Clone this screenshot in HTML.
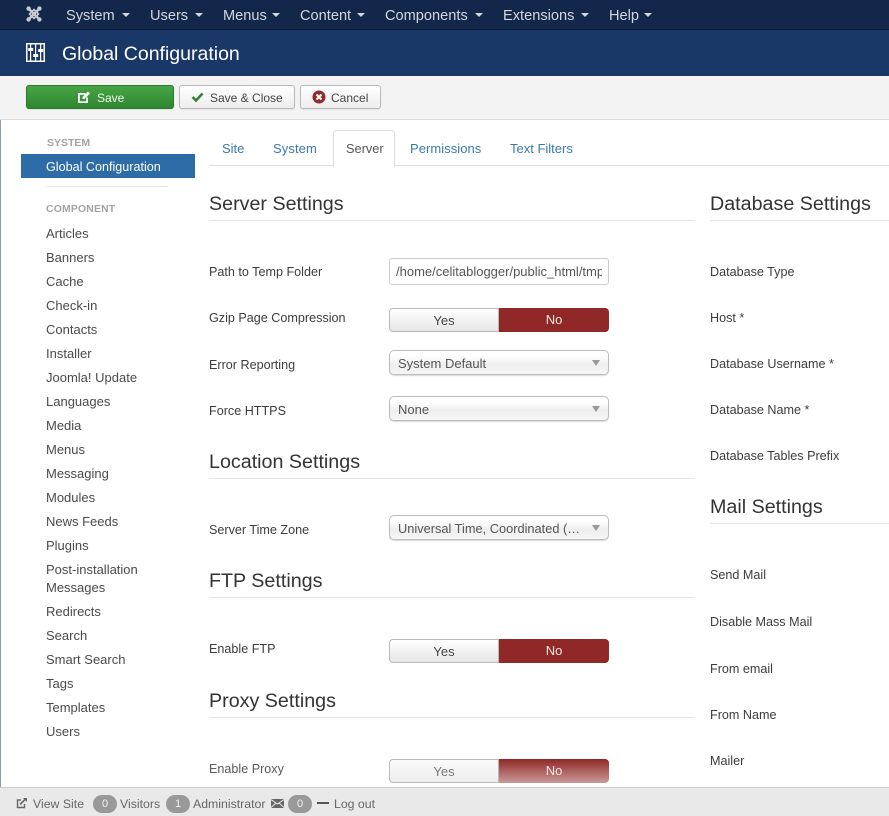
<!DOCTYPE html>
<html><head><meta charset="utf-8"><title>Global Configuration</title>
<style>
html,body{margin:0;padding:0}
body{width:889px;height:816px;position:relative;overflow:hidden;background:#fff;font-family:"Liberation Sans",Arial,sans-serif;font-size:13px;color:#333}
.a,.t{position:absolute}
.t{white-space:nowrap;line-height:18px}
.n{color:#d4d7dc;font-size:14.6px;top:7px;line-height:18px}
.car{position:absolute;width:0;height:0;border-left:4px solid transparent;border-right:4px solid transparent;border-top:4px solid #d4d7dc;top:13px}
.s{left:46px;font-size:13px;color:#4a4a4a;margin-top:1px}
.h{font-size:19.7px;color:#333;line-height:24px;margin-top:1px}
.l{font-size:12.6px;color:#3c3c3c;margin-top:1px}
.hr{position:absolute;height:1px;background:#e5e5e5}
.y{position:absolute;left:389px;width:110px;height:24px;box-sizing:border-box;border:1px solid #b9b9b9;border-radius:4px 0 0 4px;background:linear-gradient(#fff,#e6e6e6);text-align:center;font-size:13px;line-height:23px;color:#444}
.o{position:absolute;left:499px;width:110px;height:24px;border-radius:0 4px 4px 0;background:#8f2826;text-align:center;font-size:13px;line-height:24px;color:#f4e9e9}
.sel{position:absolute;left:389px;width:220px;height:25px;box-sizing:border-box;border:1px solid #bdbdbd;border-radius:5px;background:linear-gradient(#fff 20%,#eee 60%,#f6f6f6);box-shadow:0 1px 1px rgba(0,0,0,.15);font-size:13px;line-height:25px;color:#555;padding-left:8px;white-space:nowrap}
.sel:after{content:"";position:absolute;right:8px;top:9px;border-left:4px solid transparent;border-right:4px solid transparent;border-top:6px solid #999}
.b{position:absolute;top:85px;height:24px;box-sizing:border-box;border:1px solid #b9b9b9;border-radius:3px;background:linear-gradient(#fff,#ededed);font-size:12px;line-height:22px;color:#444;box-shadow:0 1px 1px rgba(0,0,0,.08)}
.tb{font-size:13px;top:140px;color:#3a78b2}
.badge{position:absolute;top:795px;width:24px;height:18px;border-radius:9px;background:#999;color:#f3f3f3;text-align:center;font-size:11px;line-height:19px}
.f{font-size:12.3px;color:#666;top:795px}
</style></head><body>
<div class="a" style="left:0;top:0;width:889px;height:29px;background:#13274a"></div>
<div class="a" style="left:0;top:29px;width:889px;height:1px;background:#0c1b33"></div>
<div class="a" style="left:0;top:30px;width:889px;height:46px;background:#1a3867"></div>
<div class="a" style="left:0;top:76px;width:889px;height:43px;background:#f3f3f3"></div>
<div class="a" style="left:0;top:119px;width:889px;height:1px;background:#dcdcdc"></div>
<div class="a" style="left:0;top:120px;width:1px;height:667px;background:#8c9bb0"></div>

<svg class="a" style="left:26px;top:6px" width="16" height="16" viewBox="0 0 16 16"><g stroke="#c8ccd2" fill="none"><path d="M3 3L13 13M13 3L3 13" stroke-width="2.4"/><path d="M8 3.5L12.5 8L8 12.5L3.5 8Z" stroke-width="1.6"/></g><g fill="#c8ccd2"><circle cx="2.6" cy="2.6" r="2.2"/><circle cx="13.4" cy="2.6" r="2.2"/><circle cx="2.6" cy="13.4" r="2.2"/><circle cx="13.4" cy="13.4" r="2.2"/></g></svg>
<div class="t n" style="left:66px">System</div><i class="car" style="left:122px"></i>
<div class="t n" style="left:150px">Users</div><i class="car" style="left:195px"></i>
<div class="t n" style="left:223px">Menus</div><i class="car" style="left:272px"></i>
<div class="t n" style="left:300px">Content</div><i class="car" style="left:357px"></i>
<div class="t n" style="left:385px">Components</div><i class="car" style="left:475px"></i>
<div class="t n" style="left:503px">Extensions</div><i class="car" style="left:581px"></i>
<div class="t n" style="left:609px">Help</div><i class="car" style="left:644px"></i>

<svg class="a" style="left:26px;top:43px" width="19" height="19" viewBox="0 0 19 19"><rect x=".75" y=".75" width="17.5" height="17.5" fill="none" stroke="#fff" stroke-width="1.5"/><g fill="#fff"><rect x="4" y="1" width="1.2" height="17"/><rect x="9" y="1" width="1.2" height="17"/><rect x="14" y="1" width="1.2" height="17"/><rect x="2.2" y="5" width="5" height="3"/><rect x="7.2" y="11" width="5" height="3"/><rect x="12.2" y="6" width="5" height="3"/></g></svg>
<div class="t" style="left:62px;top:42px;font-size:19.5px;line-height:24px;color:#fff">Global Configuration</div>

<div class="b" style="left:26px;width:148px;background:linear-gradient(#46a546,#2f862f);border:1px solid #2a7a2a;color:#eef6ee"><span class="t" style="left:70px;top:3px">Save</span>
<svg class="a" style="left:50px;top:4px" width="14" height="14" viewBox="0 0 14 14"><path d="M1 3H8.5V4.8H2.8V11.2H9.2V7.5H11V13H1Z" fill="#fff"/><path d="M5.5 7L11 1.5L13 3.5L7.5 9H5.5Z" fill="#fff"/></svg></div>
<div class="b" style="left:179px;width:116px"><span class="t" style="left:30px;top:3px">Save &amp; Close</span>
<svg class="a" style="left:11px;top:5px" width="13" height="12" viewBox="0 0 13 12"><path d="M1.5 6L5 9.5L11.5 2.5" fill="none" stroke="#378137" stroke-width="2.6"/></svg></div>
<div class="b" style="left:300px;width:81px"><span class="t" style="left:30px;top:3px">Cancel</span>
<svg class="a" style="left:11px;top:4px" width="14" height="14" viewBox="0 0 14 14"><circle cx="7" cy="7" r="6.5" fill="#97282a"/><path d="M4.5 4.5L9.5 9.5M9.5 4.5L4.5 9.5" stroke="#fff" stroke-width="2.2"/></svg></div>

<div class="t" style="left:47px;top:134px;font-size:10.5px;font-weight:bold;color:#a3a3a3">SYSTEM</div>
<div class="a" style="left:21px;top:154px;width:174px;height:24px;background:#2d6ca6"></div>
<div class="t" style="left:46px;top:158px;font-size:12.6px;color:#fff">Global Configuration</div>
<div class="hr" style="left:47px;top:186px;width:121px"></div>
<div class="t" style="left:46px;top:201px;font-size:10.4px;font-weight:bold;color:#a3a3a3;letter-spacing:.2px">COMPONENT</div>
<div class="t s" style="top:224px">Articles</div>
<div class="t s" style="top:248px">Banners</div>
<div class="t s" style="top:272px">Cache</div>
<div class="t s" style="top:296px">Check-in</div>
<div class="t s" style="top:320px">Contacts</div>
<div class="t s" style="top:344px">Installer</div>
<div class="t s" style="top:368px">Joomla! Update</div>
<div class="t s" style="top:392px">Languages</div>
<div class="t s" style="top:416px">Media</div>
<div class="t s" style="top:440px">Menus</div>
<div class="t s" style="top:464px">Messaging</div>
<div class="t s" style="top:488px">Modules</div>
<div class="t s" style="top:512px">News Feeds</div>
<div class="t s" style="top:536px">Plugins</div>
<div class="t s" style="top:560px">Post-installation</div>
<div class="t s" style="top:578px">Messages</div>
<div class="t s" style="top:602px">Redirects</div>
<div class="t s" style="top:626px">Search</div>
<div class="t s" style="top:650px">Smart Search</div>
<div class="t s" style="top:674px">Tags</div>
<div class="t s" style="top:698px">Templates</div>
<div class="t s" style="top:722px">Users</div>

<div class="hr" style="left:209px;top:165px;width:680px;background:#ddd"></div>
<div class="a" style="left:333px;top:130px;width:60px;height:36px;border:1px solid #ddd;border-bottom:none;border-radius:4px 4px 0 0;background:#fff"></div>
<div class="t tb" style="left:222px">Site</div>
<div class="t tb" style="left:273px;letter-spacing:.1px">System</div>
<div class="t tb" style="left:346px;color:#555;font-size:12.8px">Server</div>
<div class="t tb" style="left:410px;letter-spacing:.05px">Permissions</div>
<div class="t tb" style="left:510px">Text Filters</div>

<div class="t h" style="left:209px;top:191px">Server Settings</div><div class="hr" style="left:209px;top:220px;width:486px"></div>
<div class="t l" style="left:209px;top:262px">Path to Temp Folder</div>
<div class="a" style="left:389px;top:258px;width:220px;height:27px;box-sizing:border-box;border:1px solid #ccc;border-radius:3px;background:#fff;font-size:13px;line-height:25px;color:#555;padding-left:6px;overflow:hidden;white-space:nowrap"><span style="display:block;width:206px;overflow:hidden">/home/celitablogger/public_html/tmp</span></div>
<div class="t l" style="left:209px;top:308px">Gzip Page Compression</div>
<div class="y" style="top:308px">Yes</div><div class="o" style="top:308px">No</div>
<div class="t l" style="left:209px;top:355px">Error Reporting</div>
<div class="sel" style="top:350px">System Default</div>
<div class="t l" style="left:209px;top:401px">Force HTTPS</div>
<div class="sel" style="top:396px">None</div>

<div class="t h" style="left:209px;top:449px">Location Settings</div><div class="hr" style="left:209px;top:478px;width:486px"></div>
<div class="t l" style="left:209px;top:520px">Server Time Zone</div>
<div class="sel" style="top:515px;font-size:12.8px">Universal Time, Coordinated (…</div>

<div class="t h" style="left:209px;top:568px">FTP Settings</div><div class="hr" style="left:209px;top:597px;width:486px"></div>
<div class="t l" style="left:209px;top:639px">Enable FTP</div>
<div class="y" style="top:639px">Yes</div><div class="o" style="top:639px">No</div>

<div class="t h" style="left:209px;top:688px">Proxy Settings</div><div class="hr" style="left:209px;top:717px;width:486px"></div>
<div class="t l" style="left:209px;top:759px;opacity:.85">Enable Proxy</div>
<div class="y" style="top:759px;color:#777;background:linear-gradient(#fafafa,#eee)">Yes</div>
<div class="o" style="top:759px;background:linear-gradient(#8f2826,#c99a98)">No</div>

<div class="t h" style="left:710px;top:191px">Database Settings</div><div class="hr" style="left:710px;top:220px;width:179px"></div>
<div class="t l" style="left:710px;top:262px">Database Type</div>
<div class="t l" style="left:710px;top:308px">Host *</div>
<div class="t l" style="left:710px;top:354px">Database Username *</div>
<div class="t l" style="left:710px;top:400px">Database Name *</div>
<div class="t l" style="left:710px;top:446px">Database Tables Prefix</div>
<div class="t h" style="left:710px;top:494px">Mail Settings</div><div class="hr" style="left:710px;top:523px;width:179px"></div>
<div class="t l" style="left:710px;top:565px">Send Mail</div>
<div class="t l" style="left:710px;top:612px">Disable Mass Mail</div>
<div class="t l" style="left:710px;top:659px">From email</div>
<div class="t l" style="left:710px;top:705px">From Name</div>
<div class="t l" style="left:710px;top:751px">Mailer</div>

<div class="a" style="left:0;top:787px;width:889px;height:29px;background:#e9e9e9;border-top:1px solid #ccc;box-sizing:border-box"></div>
<svg class="a" style="left:16px;top:797px" width="12" height="12" viewBox="0 0 12 12"><path d="M8.5 7V10.5H1.5V3H5" fill="none" stroke="#666" stroke-width="1.4"/><path d="M4 7.5L9 2.5" fill="none" stroke="#666" stroke-width="1.6"/><path d="M7 1H11V5Z" fill="#666"/></svg>
<div class="t f" style="left:33px">View Site</div>
<div class="badge" style="left:93px">0</div>
<div class="t f" style="left:120px">Visitors</div>
<div class="badge" style="left:166px">1</div>
<div class="t f" style="left:193px">Administrator</div>
<svg class="a" style="left:271px;top:799px" width="13" height="9" viewBox="0 0 13 9"><rect width="13" height="9" fill="#666"/><path d="M0 .5L6.5 5L13 .5M0 8.5L5 4M13 8.5L8 4" stroke="#e9e9e9" fill="none"/></svg>
<div class="badge" style="left:288px">0</div>
<div class="a" style="left:317px;top:802px;width:12px;height:2px;background:#555"></div>
<div class="t f" style="left:334px">Log out</div>
</body></html>
